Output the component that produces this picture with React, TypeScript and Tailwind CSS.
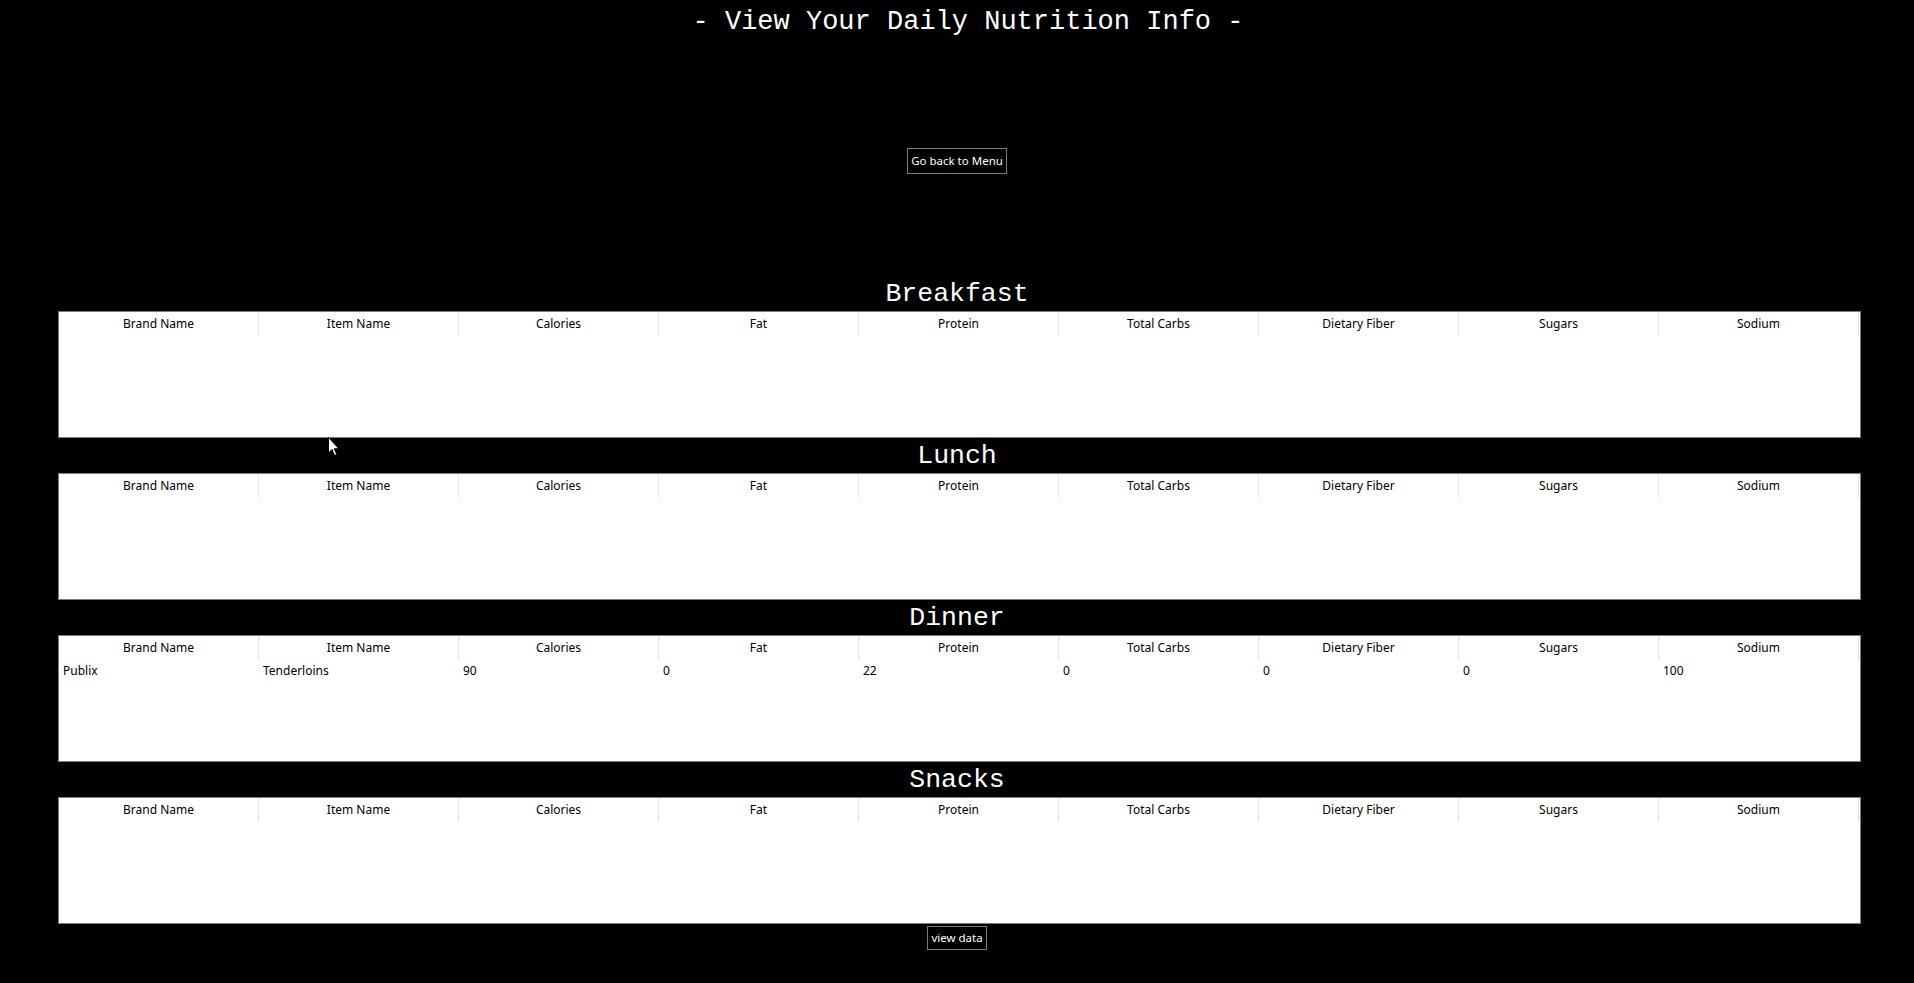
import React from "react";

const columns = [
  "Brand Name",
  "Item Name",
  "Calories",
  "Fat",
  "Protein",
  "Total Carbs",
  "Dietary Fiber",
  "Sugars",
  "Sodium",
];

type Row = string[];

const meals: { title: string; rows: Row[] }[] = [
  { title: "Breakfast", rows: [] },
  { title: "Lunch", rows: [] },
  {
    title: "Dinner",
    rows: [["Publix", "Tenderloins", "90", "0", "22", "0", "0", "0", "100"]],
  },
  { title: "Snacks", rows: [] },
];

const MealTable: React.FC<{ title: string; rows: Row[] }> = ({ title, rows }) => {
  return (
    <div className="flex flex-col">
      <h2 className="h-[35px] text-center text-[26.5px] leading-[36px] text-white font-['Liberation_Mono','Courier_New',monospace]">
        {title}
      </h2>
      <div className="ml-[58px] w-[1803px] h-[127px] border border-[#7a7a80] bg-white text-[12px] text-black font-['Noto_Sans',sans-serif]">
        <div className="grid grid-cols-[repeat(9,200px)] h-[24px]">
          {columns.map((c) => (
            <div
              key={c}
              className="flex items-center justify-center border-r border-[#e3e3e3]"
            >
              {c}
            </div>
          ))}
        </div>
        {rows.map((r, i) => (
          <div key={i} className="grid grid-cols-[repeat(9,200px)] h-[22px]">
            {r.map((v, j) => (
              <div key={j} className="flex items-center pl-[4px]">
                {v}
              </div>
            ))}
          </div>
        ))}
      </div>
    </div>
  );
};

export default function App() {
  return (
    <div className="relative min-h-[983px] w-[1914px] bg-black text-white">
      <h1 className="h-[41px] pt-[2px] pl-[22px] text-center text-[27px] leading-[41px] font-['Liberation_Mono','Courier_New',monospace]">
        - View Your Daily Nutrition Info -
      </h1>

      <div className="mt-[107px] flex justify-center">
        <button className="h-[26px] w-[100px] border border-[#7a7a7a] bg-black text-[11.5px] text-white font-['Noto_Sans',sans-serif]">
          Go back to Menu
        </button>
      </div>

      <div className="mt-[102px] flex flex-col">
        {meals.map((m) => (
          <MealTable key={m.title} title={m.title} rows={m.rows} />
        ))}
      </div>

      <div className="mt-[2px] flex justify-center">
        <button className="h-[24px] w-[60px] border border-[#7a7a7a] bg-black text-[11.5px] text-white font-['Noto_Sans',sans-serif]">
          view data
        </button>
      </div>

      {/* mouse pointer visible in the screenshot */}
      <svg
        className="absolute left-[328px] top-[437px]"
        width="13"
        height="20"
        viewBox="0 0 13 20"
      >
        <path
          d="M0.5 0.5 L0.5 16 L4 12.5 L6.5 18.5 L8.8 17.5 L6.3 11.8 L11 11.8 Z"
          fill="white"
          stroke="black"
          strokeWidth="1"
        />
      </svg>
    </div>
  );
}
